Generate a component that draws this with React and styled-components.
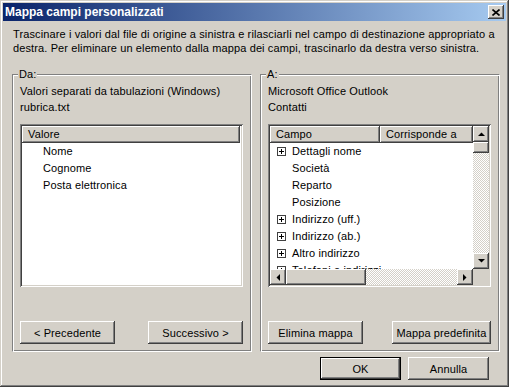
import React from 'react';
import styled, { createGlobalStyle, css } from 'styled-components';

const GlobalStyle = createGlobalStyle`
  html, body {
    margin: 0;
    padding: 0;
    background: #d4d0c8;
  }
  body {
    font-family: "Liberation Sans", Arial, sans-serif;
    font-size: 11px;
    letter-spacing: 0.12px;
    color: #000;
  }
  * {
    box-sizing: border-box;
  }
`;

const raised = css`
  background: #d4d0c8;
  box-shadow: inset -1px -1px #404040, inset 1px 1px #fff, inset -2px -2px #808080, inset 2px 2px #d4d0c8;
`;

const checker = css`
  background: repeating-conic-gradient(#fff 0 25%, #d4d0c8 0 50%) 0 0 / 2px 2px;
`;

const Window = styled.div`
  width: 509px;
  height: 387px;
  padding: 3px;
  display: flex;
  flex-direction: column;
  background: #d4d0c8;
  box-shadow: inset -1px -1px #404040, inset 1px 1px #d4d0c8, inset -2px -2px #808080, inset 2px 2px #fff;
`;

const TitleBar = styled.div`
  height: 18px;
  display: flex;
  align-items: center;
  justify-content: space-between;
  padding: 0 2px 0 2px;
  background: linear-gradient(to right, #0a246a, #a6caf0);
`;

const TitleText = styled.span`
  color: #fff;
  font-weight: bold;
  font-size: 12px;
  letter-spacing: 0;
  line-height: 18px;
  white-space: nowrap;
`;

const CloseButton = styled.div`
  ${raised};
  width: 16px;
  height: 14px;
  display: flex;
  align-items: center;
  justify-content: center;
`;

const Content = styled.div`
  flex: 1;
  display: flex;
  flex-direction: column;
  padding: 0 6px 4px 9px;
`;

const Instructions = styled.div`
  margin: 6px 0 0 1px;
  line-height: 14px;
  white-space: nowrap;
`;

const Groups = styled.div`
  display: flex;
  gap: 8px;
  margin-top: 19px;
`;

const Group = styled.div`
  position: relative;
  width: 240px;
  height: 278px;
  display: flex;
  flex-direction: column;
  padding: 8px 8px 7px 7px;
  border: 1px solid;
  border-color: #808080 #fff #fff #808080;
  box-shadow: inset 1px 1px #fff, inset -1px -1px #808080;
`;

const GroupLabel = styled.span`
  position: absolute;
  top: -7px;
  left: 5px;
  padding: 0 1px;
  line-height: 13px;
  background: #d4d0c8;
`;

const InfoLine = styled.div`
  line-height: 16px;
  white-space: nowrap;
`;

const ListBox = styled.div`
  margin-top: 9px;
  height: 163px;
  padding: 2px;
  background: #fff;
  box-shadow: inset 1px 1px #808080, inset -1px -1px #fff, inset 2px 2px #404040, inset -2px -2px #d4d0c8;
  display: grid;
  overflow: hidden;
  ${(p) =>
    p.$scroll
      ? css`
          grid-template-columns: 1fr 16px;
          grid-template-rows: 1fr 16px;
        `
      : css`
          grid-template-rows: 17px 1fr;
        `}
`;

const ListArea = styled.div`
  overflow: hidden;
  min-width: 0;
  min-height: 0;
`;

const HeaderRow = styled.div`
  display: flex;
  height: 17px;
  padding-right: ${(p) => p.$gap || 0}px;
`;

const HeaderCell = styled.div`
  ${raised};
  flex: ${(p) => (p.$width ? `0 0 ${p.$width}px` : '1')};
  height: 17px;
  line-height: 16px;
  padding-left: 6px;
  white-space: nowrap;
  overflow: hidden;
`;

const Row = styled.div`
  height: 17px;
  line-height: 17px;
  display: flex;
  align-items: center;
  padding-left: ${(p) => p.$indent}px;
  white-space: nowrap;
`;

const PlusBox = styled.span`
  flex: 0 0 9px;
  width: 9px;
  height: 9px;
  margin-left: 7px;
  margin-right: 6px;
  border: 1px solid #404040;
  background: #fff;
  display: flex;
  align-items: center;
  justify-content: center;
`;

const VScroll = styled.div`
  display: flex;
  flex-direction: column;
  min-height: 0;
`;

const HScroll = styled.div`
  display: flex;
`;

const ArrowButton = styled.div`
  ${raised};
  flex: 0 0 16px;
  width: 16px;
  height: 16px;
  display: flex;
  align-items: center;
  justify-content: center;
`;

const Thumb = styled.div`
  ${raised};
  flex: 0 0 ${(p) => p.$size}px;
`;

const Track = styled.div`
  ${checker};
  flex: 1;
`;

const Corner = styled.div`
  background: #d4d0c8;
`;

const ButtonRow = styled.div`
  margin-top: auto;
  display: flex;
  justify-content: space-between;
`;

const Button = styled.button`
  ${raised};
  width: ${(p) => p.$width}px;
  height: 23px;
  padding: 0;
  border: none;
  font-family: "Liberation Sans", Arial, sans-serif;
  font-size: 11px;
  letter-spacing: 0.12px;
  color: #000;
  white-space: nowrap;
  ${(p) =>
    p.$default &&
    css`
      border: 1px solid #000;
    `}
`;

const Footer = styled.div`
  margin-top: 5px;
  margin-right: 11px;
  display: flex;
  justify-content: flex-end;
  gap: 7px;
`;

const Arrow = ({ dir }) => {
  const shapes = {
    up: '0,4 7,4 3.5,0.5',
    down: '0,0 7,0 3.5,3.5',
    left: '4,0 4,7 0.5,3.5',
    right: '0,0 0,7 3.5,3.5',
  };
  const vertical = dir === 'up' || dir === 'down';
  return (
    <svg width={vertical ? 7 : 4} height={vertical ? 4 : 7} viewBox={vertical ? '0 0 7 4' : '0 0 4 7'}>
      <polygon points={shapes[dir]} fill="#000" />
    </svg>
  );
};

const Plus = () => (
  <PlusBox>
    <svg width="5" height="5" viewBox="0 0 5 5">
      <path d="M0 2.5H5M2.5 0V5" stroke="#000" strokeWidth="1" />
    </svg>
  </PlusBox>
);

const sourceFields = ['Nome', 'Cognome', 'Posta elettronica'];

const targetFields = [
  { label: 'Dettagli nome', group: true },
  { label: 'Società' },
  { label: 'Reparto' },
  { label: 'Posizione' },
  { label: 'Indirizzo (uff.)', group: true },
  { label: 'Indirizzo (ab.)', group: true },
  { label: 'Altro indirizzo', group: true },
  { label: 'Telefoni e indirizzi', group: true },
];

const App = () => (
  <>
    <GlobalStyle />
    <Window>
      <TitleBar>
        <TitleText>Mappa campi personalizzati</TitleText>
        <CloseButton>
          <svg width="8" height="7" viewBox="0 0 8 7">
            <path d="M0.5 0.5L7.5 6.5M7.5 0.5L0.5 6.5" stroke="#000" strokeWidth="1.6" />
          </svg>
        </CloseButton>
      </TitleBar>
      <Content>
        <Instructions>
          Trascinare i valori dal file di origine a sinistra e rilasciarli nel campo di destinazione appropriato a
          <br />
          destra. Per eliminare un elemento dalla mappa dei campi, trascinarlo da destra verso sinistra.
        </Instructions>
        <Groups>
          <Group>
            <GroupLabel>Da:</GroupLabel>
            <InfoLine>Valori separati da tabulazioni (Windows)</InfoLine>
            <InfoLine>rubrica.txt</InfoLine>
            <ListBox>
              <HeaderRow $gap={1}>
                <HeaderCell>Valore</HeaderCell>
              </HeaderRow>
              <ListArea>
                {sourceFields.map((f) => (
                  <Row key={f} $indent={21}>
                    {f}
                  </Row>
                ))}
              </ListArea>
            </ListBox>
            <ButtonRow>
              <Button $width={95}>&lt; Precedente</Button>
              <Button $width={95}>Successivo &gt;</Button>
            </ButtonRow>
          </Group>
          <Group>
            <GroupLabel>A:</GroupLabel>
            <InfoLine>Microsoft Office Outlook</InfoLine>
            <InfoLine>Contatti</InfoLine>
            <ListBox $scroll>
              <ListArea>
                <HeaderRow>
                  <HeaderCell $width={110}>Campo</HeaderCell>
                  <HeaderCell>Corrisponde a</HeaderCell>
                </HeaderRow>
                {targetFields.map((f) => (
                  <Row key={f.label} $indent={f.group ? 0 : 22}>
                    {f.group && <Plus />}
                    {f.label}
                  </Row>
                ))}
              </ListArea>
              <VScroll>
                <ArrowButton>
                  <Arrow dir="up" />
                </ArrowButton>
                <Thumb $size={11} />
                <Track />
                <ArrowButton>
                  <Arrow dir="down" />
                </ArrowButton>
              </VScroll>
              <HScroll>
                <ArrowButton>
                  <Arrow dir="left" />
                </ArrowButton>
                <Thumb $size={80} />
                <Track />
                <ArrowButton>
                  <Arrow dir="right" />
                </ArrowButton>
              </HScroll>
              <Corner />
            </ListBox>
            <ButtonRow>
              <Button $width={95}>Elimina mappa</Button>
              <Button $width={99}>Mappa predefinita</Button>
            </ButtonRow>
          </Group>
        </Groups>
        <Footer>
          <Button $width={81} $default>
            OK
          </Button>
          <Button $width={81}>Annulla</Button>
        </Footer>
      </Content>
    </Window>
  </>
);

export default App;
